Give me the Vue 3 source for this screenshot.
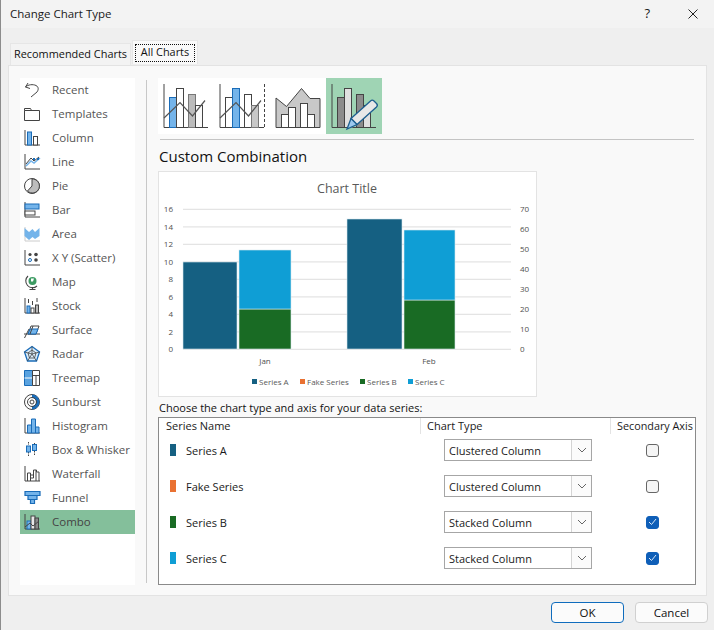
<script setup>
const D = '#444', B = '#1a6cb8', L = '#74b4ea'
const axis = `<path d="M2 1v15h15" fill="none" stroke="${D}"/>`
const types = [
  { n: 'Recent', i: `<path d="M5 2 2.5 6 7 7.5M2.5 6C5 3.5 10 3 13 4.5S15.5 9 14 11L8 16" fill="none" stroke="${D}"/>` },
  { n: 'Templates', i: `<path d="M1.5 5.5h15v10h-15zM1.500 5.500v-2h6l1 2" fill="#fff" stroke="${D}"/>` },
  { n: 'Column', i: `${axis}<rect x="4.500" y="3" width="4" height="13" fill="${L}" stroke="${B}"/><rect x="10.500" y="7.500" width="4" height="8.500" fill="#fff" stroke="${D}"/>` },
  { n: 'Line', i: `${axis}<path d="M3 13 8 8l3 2 6-5" fill="none" stroke="${L}" stroke-width="1.500"/><path d="M3 11 8 5l3 3 5-4" fill="none" stroke="${D}"/><path d="M10 5h2v2h-2zM14 5h2v2h-2z" fill="${B}"/>` },
  { n: 'Pie', i: `<circle cx="9" cy="9" r="7.500" fill="#fff" stroke="${D}"/><path d="M9 2v7l-4.500 5A7 7 0 1 0 9 2z" fill="#bdbdbd" stroke="${D}"/>` },
  { n: 'Bar', i: `<path d="M2 1v15h15" fill="none" stroke="${D}"/><rect x="2" y="3" width="14" height="5" fill="${L}" stroke="${B}"/><rect x="2" y="10" width="10" height="4" fill="#fff" stroke="${D}"/>` },
  { n: 'Area', i: `<path d="M2 2v14h15" fill="none" stroke="#ccc"/><path d="M1.500 3 6 7l3.500-3L12 7l4.500-4v8L12 14l-2.500-2L6 15l-4.500-4z" fill="${L}"/>` },
  { n: 'X Y (Scatter)', i: `${axis}<circle cx="7" cy="5.500" r="1.600" fill="${D}"/><circle cx="13" cy="5.500" r="1.800" fill="${D}"/><circle cx="13" cy="11" r="1.800" fill="${D}"/><circle cx="7" cy="11" r="1.500" fill="#fff" stroke="${B}"/>` },
  { n: 'Map', i: `<circle cx="9.500" cy="8" r="4" fill="#3d9b63"/><path d="M5 3a6.500 6.500 0 0 0 9 10M9.500 14v2.500M6.500 16.500h6" fill="none" stroke="${D}" stroke-width="1.100"/><path d="M8 5.500h3l-1 3H8z" fill="#fff"/>` },
  { n: 'Stock', i: `${axis}<rect x="4" y="9" width="3" height="7" fill="${L}" stroke="${B}"/><rect x="12.500" y="8" width="3" height="8" fill="#bbb" stroke="${D}"/><path d="M5.500 2v4M9.500 4v4M14 1v4" stroke="${D}"/><rect x="8" y="11" width="3" height="5" fill="#fff" stroke="${D}"/>` },
  { n: 'Surface', i: `<path d="M1.500 17 6 8M1 13h16" stroke="${D}" fill="none"/><path d="M5 13 8 5h8l-3 8z" fill="#fff" stroke="${D}"/><path d="M5 13l2-5h8l-2 5z" fill="${L}" stroke="${B}"/><path d="M10 5l-3 8" stroke="${D}"/>` },
  { n: 'Radar', i: `<path d="M9 1.500 16.500 7l-3 9h-9l-3-9z" fill="#d9ecfb" stroke="${B}" stroke-width="1.300"/><path d="M9 5 13 8l-1.500 5h-5L5 8zM9 1.500V9l7.500-2M9 9l4.500 7M9 9l-4.500 7M9 9 1.500 7" fill="none" stroke="${D}" stroke-width=".8"/>` },
  { n: 'Treemap', i: `<path d="M1.500 1.500h8v15h-8z" fill="#5aa3e0" stroke="${B}"/><path d="M1.500 9h8" stroke="#fff"/><path d="M9.500 1.500h7v15h-7zM9.500 6.500h7M13 6.500v10" fill="#fff" stroke="${D}"/>` },
  { n: 'Sunburst', i: `<circle cx="9" cy="9" r="7.500" fill="#fff" stroke="${D}"/><path d="M9 1.500A7.500 7.500 0 0 1 9 16.500V13A4 4 0 0 0 9 5z" fill="${B}"/><circle cx="9" cy="9" r="4.500" fill="none" stroke="${D}"/><circle cx="9" cy="9" r="2" fill="#fff" stroke="${D}"/>` },
  { n: 'Histogram', i: `${axis}<path d="M4.500 16V8h4v8zM8.500 16V2h4v14zM12.500 16v-6h3.500v6z" fill="${L}" stroke="${B}"/>` },
  { n: 'Box & Whisker', i: `<path d="M5.500 1v3M5.500 11v4M11.500 2v3M11.500 10v4" stroke="${D}" stroke-dasharray="1.500 1"/><rect x="3.500" y="5" width="4" height="6" fill="${L}" stroke="${B}"/><rect x="9.500" y="3.500" width="4" height="6" fill="${L}" stroke="${B}"/>` },
  { n: 'Waterfall', i: `${axis}<path d="M4.500 16V8h3v8M7.500 10h3V5h3v2h2.500v9M13 5v11M10.500 10v3H7.500" fill="none" stroke="${D}"/>` },
  { n: 'Funnel', i: `<path d="M2 2.500h15v4H2zM5 6.500h9v4H5zM7.500 10.500h4v4h-4z" fill="${L}" stroke="${B}" stroke-width="1.200"/>` },
  { n: 'Combo', i: `${axis}<rect x="4" y="8" width="4" height="8" fill="${L}" stroke="${B}"/><rect x="8" y="3" width="4" height="13" fill="#e8e8e8" stroke="${D}"/><rect x="12" y="5" width="3.500" height="11" fill="#8a8a8a" stroke="${D}"/><path d="M2 14l5-4 3 3 6-5" fill="none" stroke="${D}"/>` }
]
const series = [
  { n: 'Series A', c: '#156082', t: 'Clustered Column', k: false },
  { n: 'Fake Series', c: '#e97132', t: 'Clustered Column', k: false },
  { n: 'Series B', c: '#196b24', t: 'Stacked Column', k: true },
  { n: 'Series C', c: '#0f9ed5', t: 'Stacked Column', k: true }
]
const grid = [0, 2, 4, 6, 8, 10, 12, 14, 16].map((v, i) => ({ v, y: 178.300 - i * 17.500 }))
const right = [0, 10, 20, 30, 40, 50, 60, 70].map((v, i) => ({ v, y: 178.300 - i * 20 }))
const bars = [
  { x: 25, y: 91, w: 54, h: 87, c: '#156082' },
  { x: 81, y: 138, w: 52, h: 40, c: '#196b24' },
  { x: 81, y: 79, w: 52, h: 59, c: '#0f9ed5' },
  { x: 189, y: 48, w: 55, h: 130, c: '#156082' },
  { x: 246, y: 129, w: 51, h: 49, c: '#196b24' },
  { x: 246, y: 59, w: 51, h: 70, c: '#0f9ed5' }
]
const legend = [
  { x: 94, t: 'Series A', c: '#156082' },
  { x: 142, t: 'Fake Series', c: '#e97132' },
  { x: 202, t: 'Series B', c: '#196b24' },
  { x: 250, t: 'Series C', c: '#0f9ed5' }
]
</script>

<template>
  <div class="win">
    <header class="title">
      <span class="titletext">Change Chart Type</span>
      <div class="winbtns">
        <span class="help">?</span>
        <svg width="10" height="10" viewBox="0 0 10 10"><path d="M.5.500l9 9M9.500.500l-9 9" stroke="#222" fill="none" /></svg>
      </div>
    </header>

    <div class="tabs">
      <div class="tab">Recommended Charts</div>
      <div class="tab active"><span>All Charts</span></div>
    </div>

    <section class="panel">
      <nav class="side">
        <div v-for="t in types" :key="t.n" class="item" :class="{ sel: t.n === 'Combo' }">
          <svg width="18" height="18" viewBox="0 0 18 18" v-html="t.i"></svg>
          <span>{{ t.n }}</span>
        </div>
      </nav>
      <div class="vline"></div>
      <main class="content">
        <div class="thumbs">
          <div class="thumbwrap">
            <svg width="56" height="56" viewBox="0 0 56 56">
              <path d="M6 6v43.500h44" fill="none" stroke="#444" />
              <rect x="11.500" y="19.500" width="7" height="30" fill="#74b4ea" stroke="#1a6cb8" />
              <rect x="18.500" y="10.500" width="7" height="39" fill="#fff" stroke="#444" />
              <rect x="30.500" y="16.500" width="7" height="33" fill="#bbb" stroke="#777" />
              <rect x="37.500" y="27.500" width="7" height="22" fill="#fafafa" stroke="#444" />
              <path d="M6 40 22 24.500 34.500 38 47 22.500" fill="none" stroke="#555" stroke-width="1.200" />
            </svg>
            <svg width="56" height="56" viewBox="0 0 56 56">
              <path d="M6 6v43.500h44" fill="none" stroke="#444" />
              <path d="M50.500 6v43" fill="none" stroke="#444" stroke-dasharray="3 2" />
              <rect x="11.500" y="19.500" width="7" height="30" fill="#fff" stroke="#444" />
              <rect x="18.500" y="10.500" width="7" height="39" fill="#74b4ea" stroke="#1a6cb8" />
              <rect x="30.500" y="16.500" width="7" height="33" fill="#fff" stroke="#444" />
              <rect x="37.500" y="27.500" width="7" height="22" fill="#c8c8c8" stroke="#777" />
              <path d="M6 40 22 24.500 34.500 38 47 22.500" fill="none" stroke="#555" stroke-width="1.200" />
            </svg>
            <svg width="56" height="56" viewBox="0 0 56 56">
              <path d="M6 20 16.500 28.500 31.500 10.500 40 20.500H50V49.500H6z" fill="#c8c8c8" stroke="#444" />
              <rect x="11.500" y="36.500" width="7" height="13" fill="#fff" stroke="#444" />
              <rect x="18.500" y="29.500" width="7" height="20" fill="#fff" stroke="#444" />
              <rect x="30.500" y="25.500" width="7" height="24" fill="#fff" stroke="#444" />
              <rect x="37.500" y="36.500" width="7" height="13" fill="#fff" stroke="#444" />
            </svg>
          </div>
          <div class="thumb-sel">
            <svg width="56" height="56" viewBox="0 0 56 56">
              <path d="M6 6v43.500h44" fill="none" stroke="#444" />
              <rect x="11.500" y="19.500" width="7" height="30" fill="#8c8c8c" stroke="#444" />
              <rect x="18.500" y="10.500" width="7" height="39" fill="#e0e0e0" stroke="#444" />
              <rect x="30.500" y="16.500" width="7" height="33" fill="#8c8c8c" stroke="#444" />
              <rect x="37.500" y="27.500" width="7" height="22" fill="#e0e0e0" stroke="#444" />
              <path d="M21 51.500 24 42 46 22.500 51 27.500 30 48z" fill="#cfe9da" opacity=".7" />
              <path d="M25 40.500 44.500 23a2.500 2.500 0 0 1 3.500 0l2.500 2.500a2.500 2.500 0 0 1 0 3.500L31 46.500z" fill="#e8e8e8" stroke="#1d5f8f" stroke-width="1.300" />
              <path d="M25 40.500 21 51 31 46.500z" fill="#9cc9ee" stroke="#1d5f8f" stroke-width="1.300" />
            </svg>
          </div>
        </div>
        <div class="hr"></div>
        <h2 class="sub">Custom Combination</h2>
        <div class="chart">
          <svg width="379" height="226" viewBox="0 0 379 226">
            <text x="189" y="21.500" class="ct" text-anchor="middle">Chart Title</text>
            <path v-for="g in grid" :key="g.v" :d="`M25 ${g.y}H353`" stroke="#e4e4e4" stroke-width="1.300" fill="none" />
            <text v-for="g in grid" :key="'l' + g.v" x="15" :y="g.y + 3" class="ax" text-anchor="end">{{ g.v }}</text>
            <text v-for="g in right" :key="'r' + g.v" x="362" :y="g.y + 3" class="ax">{{ g.v }}</text>
            <rect v-for="(b, i) in bars" :key="i" :x="b.x" :y="b.y" :width="b.w" :height="b.h" :fill="b.c" stroke="#d8e8ee" stroke-width=".6" />
            <text x="107" y="193" class="ax" text-anchor="middle">Jan</text>
            <text x="271" y="193" class="ax" text-anchor="middle">Feb</text>
            <g v-for="l in legend" :key="l.t">
              <rect :x="l.x" y="208" width="5" height="5" :fill="l.c" />
              <text :x="l.x + 7" y="214" class="lg">{{ l.t }}</text>
            </g>
          </svg>
        </div>
        <p class="choose">Choose the chart type and axis for your data series:</p>
        <div class="table">
          <div class="thead">
            <span>Series Name</span>
            <span class="sep">Chart Type</span>
            <span class="sep">Secondary Axis</span>
          </div>
          <div v-for="s in series" :key="s.n" class="row">
            <div class="name">
              <i class="swatch" :style="{ background: s.c }"></i>
              <span>{{ s.n }}</span>
            </div>
            <div class="selcell">
              <div class="select">
                <span class="val">{{ s.t }}</span>
                <span class="drop">
                  <svg width="10" height="6" viewBox="0 0 10 6"><path d="M1 1l4 4 4-4" fill="none" stroke="#666" /></svg>
                </span>
              </div>
            </div>
            <div class="chkcell">
              <span class="chk" :class="{ on: s.k }">
                <svg v-if="s.k" width="9" height="8" viewBox="0 0 9 8"><path d="M1 4l2.500 2.500L8 1" fill="none" stroke="#d8e8f8" /></svg>
              </span>
            </div>
          </div>
        </div>
      </main>
    </section>

    <footer class="foot">
      <button class="btn ok">OK</button>
      <button class="btn">Cancel</button>
    </footer>
  </div>
</template>

<style>
html, body { margin: 0; background: #efefef; }
</style>

<style scoped>
.win {
  width: 714px;
  height: 630px;
  box-sizing: border-box;
  border-left: 1px solid #8c8c8c;
  background: #efefef;
  font-family: "Open Sans", "Noto Sans", sans-serif;
  font-size: 11.500px;
  color: #1a1a1a;
  overflow: hidden;
}
.title {
  height: 28px;
  background: #f3f3f3;
  display: flex;
  align-items: center;
  justify-content: space-between;
  padding: 0 16px 0 9px;
}
.titletext { margin-top: -2px; }
.winbtns { display: flex; align-items: center; gap: 38px; margin-top: -1px; }
.help { font-size: 13px; margin-top: -2px; }
.tabs {
  height: 37px;
  box-sizing: border-box;
  padding: 13px 0 0 9px;
  display: flex;
  align-items: flex-end;
}
.tab {
  width: 121px;
  height: 22px;
  box-sizing: border-box;
  background: #f3f3f3;
  border: 1px solid #e6e6e6;
  border-bottom: 0;
  text-align: center;
  line-height: 19px;
  font-size: 10.900px;
  white-space: nowrap;
  color: #111;
}
.tab.active {
  width: 66px;
  height: 24px;
  margin: 0 0 0 1px;
  padding: 3px 2px;
  background: #f9f9f9;
  line-height: 15px;
  position: relative;
  top: -1px;
}
.tab.active span {
  display: block;
  border: 1px dotted #111;
  height: 16px;
  line-height: 14px;
}
.panel {
  margin-left: 7px;
  width: 699px;
  height: 531px;
  box-sizing: border-box;
  background: #f9f9f9;
  border: 1px solid #e3e3e3;
  padding: 12px 0 0 11px;
  display: flex;
  align-items: flex-start;
}
.side { width: 115px; height: 507px; background: #fff; flex: none; }
.item {
  height: 24px;
  display: flex;
  align-items: center;
  padding-left: 3px;
  color: #555;
  font-size: 11.500px;
}
.item span { margin-top: -2px; }
.item svg { flex: none; margin-right: 11px; }
.item.sel { background: #84bf9b; color: #444; }
.vline { width: 1px; height: 503px; margin: 2px 11px 0 11px; background: #c8c8c8; flex: none; }
.content { width: 539px; flex: none; }
.thumbs { display: flex; height: 56px; }
.thumbwrap { display: flex; width: 168px; background: #fff; }
.thumb-sel { width: 56px; background: #9fd4b4; }
.thumbs svg { display: block; flex: none; }
.hr { height: 1px; background: #c4c4c4; margin: 5px 3px 0 2px; }
.sub {
  margin: 5px 0 0 1px;
  font-size: 15px;
  font-weight: 400;
  line-height: 22px;
  height: 26px;
  color: #111;
}
.chart {
  width: 379px;
  height: 226px;
  box-sizing: border-box;
  background: #fff;
  box-shadow: inset 0 0 0 1px #e3e3e3;
}
.chart svg { display: block; }
.ct { font-size: 12.500px; fill: #595959; }
.ax { font-size: 8px; fill: #4f4f4f; }
.lg { font-size: 8px; fill: #595959; }
.choose { margin: 2px 0 0 1px; height: 18px; line-height: 17px; font-size: 11px; color: #111; }
.table {
  width: 538px;
  height: 168px;
  box-sizing: border-box;
  background: #fff;
  border: 1px solid #8a8a8a;
}
.thead {
  display: grid;
  grid-template-columns: 261px 190px 1fr;
  height: 14px;
  line-height: 16px;
  font-size: 11px;
}
.thead span:first-child { padding-left: 7px; }
.thead .sep { border-left: 1px solid #e3e3e3; padding-left: 6px; white-space: nowrap; font-size: 11px; }
.thead .sep:last-child { font-size: 10.800px; }
.row {
  display: grid;
  grid-template-columns: 261px 190px 1fr;
  height: 36px;
  align-items: center;
}
.name { display: flex; align-items: center; padding-left: 11px; font-size: 11px; }
.swatch { width: 6px; height: 12px; margin-right: 10px; }
.selcell { padding-left: 24px; }
.select {
  width: 148px;
  height: 22px;
  box-sizing: border-box;
  border: 1px solid #a6a6a6;
  display: flex;
  align-items: center;
  justify-content: space-between;
  font-size: 11px;
  padding-left: 4px;
}
.drop {
  width: 20px;
  height: 20px;
  box-sizing: border-box;
  border-left: 1px solid #d4d4d4;
  background: #fbfbfb;
  display: flex;
  align-items: center;
  justify-content: center;
}
.chkcell { padding-left: 36px; display: flex; }
.chk {
  width: 13px;
  height: 13px;
  box-sizing: border-box;
  border: 1px solid #666;
  border-radius: 3px;
  background: #f5f5f5;
  display: flex;
  align-items: center;
  justify-content: center;
}
.chk.on { background: #0f5fb8; border-color: #0f5fb8; }
.foot {
  height: 34px;
  box-sizing: border-box;
  padding: 6px 6px 0 0;
  display: flex;
  justify-content: flex-end;
  gap: 11px;
}
.btn {
  width: 73px;
  height: 21px;
  box-sizing: border-box;
  padding: 0;
  font: inherit;
  font-size: 11.500px;
  color: #111;
  background: #fbfbfb;
  border: 1px solid #d0d0d0;
  border-radius: 4px;
}
.btn.ok { border-color: #0f6cbd; }
</style>
